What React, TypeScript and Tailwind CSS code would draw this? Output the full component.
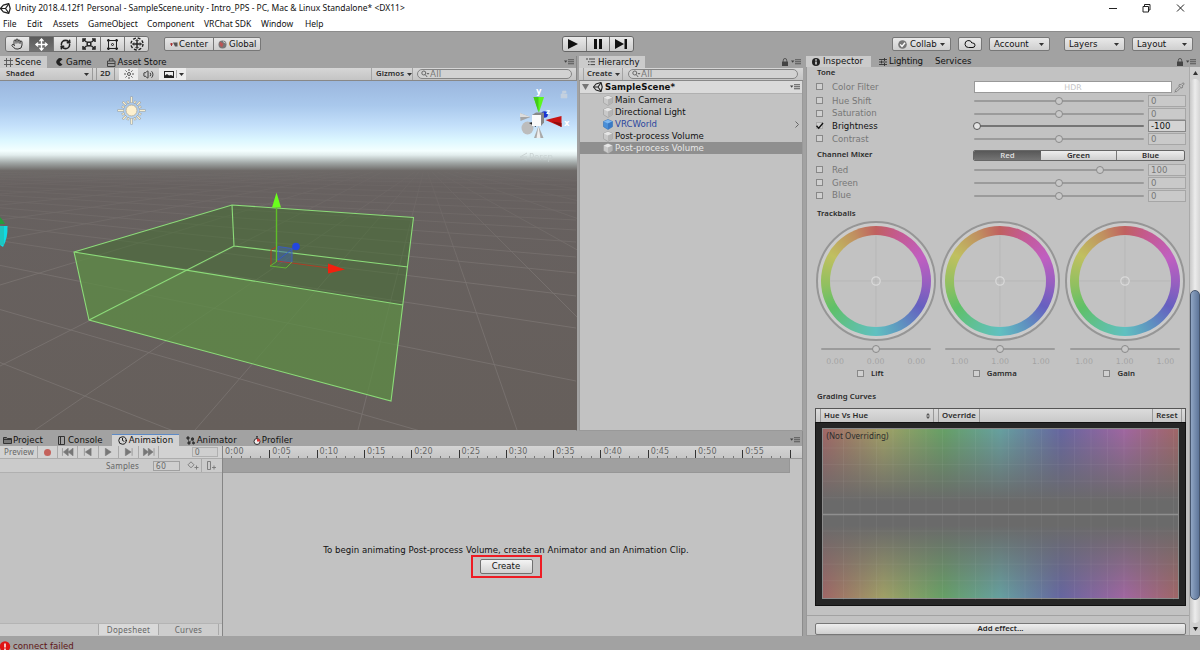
import { Hand, Move, RefreshCw, Cloud, Pipette, Volume2, Clock } from 'lucide-react';
import type { ReactNode } from 'react';

const mini = "font-['Noto_Sans',sans-serif] text-[8px] tracking-[0.1px]";
const miniBold = "font-['Noto_Sans',sans-serif] text-[7.8px] font-semibold tracking-[0.05px] text-[#2a2a2a]";

function Caret({ className = '' }: { className?: string }) {
  return (
    <svg className={`shrink-0 ${className}`} width="5" height="3" viewBox="0 0 5 3">
      <path d="M0 0h5L2.5 3z" fill="#333" />
    </svg>
  );
}

function PaneMenu({ className = '' }: { className?: string }) {
  return (
    <svg className={`shrink-0 ${className}`} width="10" height="6" viewBox="0 0 10 6">
      <path d="M0 1.5h3.4L1.7 3.8z" fill="#444" />
      <path d="M4 .8h6M4 2.8h6M4 4.8h6" stroke="#555" strokeWidth="1.1" />
    </svg>
  );
}

function PadLock({ className = '' }: { className?: string }) {
  return (
    <svg className={`shrink-0 ${className}`} width="6" height="8" viewBox="0 0 6 8">
      <path d="M0 3.500h6V8H0z" fill="#444" />
      <path d="M1.300 4V2.200a1.700 1.700 0 0 1 3.400 0V4" fill="none" stroke="#555" />
    </svg>
  );
}

function UnityLogo({ size = 10 }: { size?: number }) {
  return (
    <svg className="shrink-0" width={size} height={size} viewBox="0 0 20 20" fill="none" stroke="#222" strokeWidth="2.2" strokeLinejoin="round">
      <path d="M1 10 6 4l10-3 2.5 9L16 19 6 16z" />
      <path d="M1 10h9l6-8.500M10 10l6 8.500" />
    </svg>
  );
}

function CubeIcon({ blue = false }: { blue?: boolean }) {
  return (
    <svg className="shrink-0" width="10" height="11" viewBox="0 0 10 11">
      <path d="M5 .5 9.500 2.500v5.200L5 10.500.5 7.700V2.500z" fill={blue ? '#4a8fd8' : '#c9c9c9'} stroke={blue ? '#3472b8' : '#999'} strokeWidth=".6" />
      <path d="M.7 2.600 5 4.600l4.300-2L5 .7z" fill={blue ? '#7fb8f0' : '#e6e6e6'} />
      <path d="M5 4.600 9.300 2.600v5L5 10.200z" fill={blue ? '#3a79c4' : '#b4b4b4'} />
    </svg>
  );
}

function SearchField({ className }: { className: string }) {
  return (
    <div className={`flex items-center h-[10px] rounded-full border border-[#858585] bg-[#d2d2d2] pl-[3px] text-[8.800px] font-['DejaVu_Sans',sans-serif] tracking-[0.2px] text-[#777] ${className}`}>
      <svg width="9" height="8" viewBox="0 0 9 8" fill="none" stroke="#666">
        <circle cx="2.800" cy="3" r="2" />
        <path d="m4.200 4.600 2 2.400" />
        <path d="M5.500 3h3L7 4.800z" fill="#666" stroke="none" />
      </svg>
      All
    </div>
  );
}

function ToolButton({ children, active = false }: { children: ReactNode; active?: boolean }) {
  return (
    <div className={`flex-1 flex items-center justify-center border-r border-[#777] last:border-r-0 ${active ? 'bg-linear-to-b from-[#5a5a5a] to-[#737373] text-white' : 'bg-linear-to-b from-[#eaeaea] to-[#cbcbcb] text-[#222]'}`}>
      {children}
    </div>
  );
}

function Dropdown({ label, className }: { label: string; className: string }) {
  return (
    <div className={`flex items-center h-[14px] rounded-[2px] border border-[#777] bg-linear-to-b from-[#e9e9e9] to-[#cfcfcf] pl-[4px] pr-[5px] ${className}`}>
      {label}
      <Caret className="ml-auto" />
    </div>
  );
}

function Toolbar() {
  return (
    <div className="flex items-start h-[24px] pt-[4px] border-t border-[#8c8c8c]">
      <div className="flex h-[16px] w-[144px] ml-[5px] rounded-[3px] border border-[#707070] overflow-hidden">
        <ToolButton><Hand size={12} strokeWidth={1.8} /></ToolButton>
        <ToolButton active><Move size={13} strokeWidth={2.6} /></ToolButton>
        <ToolButton><RefreshCw size={11} strokeWidth={3.4} /></ToolButton>
        <ToolButton>
          <svg width="14" height="12" viewBox="0 0 14 12" fill="none" stroke="#222" strokeWidth="1.5">
            <path d="M1 4V1h3M10 1h3v3M13 8v3h-3M4 11H1V8M2 2l2.500 2M12 2 9.500 4M2 10l2.500-2M12 10 9.500 8" />
            <rect x="5.200" y="4.200" width="3.600" height="3.600" />
          </svg>
        </ToolButton>
        <ToolButton>
          <svg width="13" height="13" viewBox="0 0 13 13" fill="none" stroke="#222">
            <rect x="2.500" y="2.500" width="8" height="8" />
            <circle cx="6.500" cy="6.500" r="1" />
            <path d="M1 2.500h2.500M2.500 1v2.500M9.500 2.500H12M10.500 1v2.500M1 10.500h2.500M2.500 9.500V12M9.500 10.500H12M10.500 9.500V12" strokeWidth="1.6" />
          </svg>
        </ToolButton>
        <ToolButton>
          <svg width="14" height="14" viewBox="0 0 14 14" fill="none" stroke="#222" strokeWidth="1.400">
            <circle cx="7" cy="7" r="6" strokeDasharray="2.900 1.810" />
            <path d="M7 3v8M3 7h8" />
            <path d="M5.500 4 7 2.500 8.500 4M5.500 10 7 11.500 8.500 10M4 5.500 2.500 7 4 8.500M10 5.500 11.500 7 10 8.500" strokeWidth="1" />
          </svg>
        </ToolButton>
      </div>
      <div className="flex h-[14px] w-[97px] mt-[1px] ml-[15px] rounded-[2px] border border-[#777] bg-linear-to-b from-[#e6e6e6] to-[#cdcdcd]">
        <div className="flex items-center w-[49px] pl-[5px] border-r border-[#777]">
          <svg className="mr-[1px]" width="8" height="7" viewBox="0 0 8 7">
            <path d="M0 3h3M1.500 2v3" stroke="#a33" />
            <path d="M3 1.500h4.500v4H5z" fill="#555" />
          </svg>
          Center
        </div>
        <div className="flex items-center pl-[4px]">
          <svg className="mr-[2px]" width="9" height="9" viewBox="0 0 9 9">
            <circle cx="4.500" cy="4.500" r="4" fill="#777" />
            <path d="M2 1.500 5.500 4 4 7.500 1.500 5z" fill="#b55" />
            <path d="M5 1.500 7.500 3" stroke="#ccc" />
          </svg>
          Global
        </div>
      </div>
      <div className="flex h-[16px] w-[72px] ml-[301px] rounded-[3px] border border-[#666] overflow-hidden">
        <ToolButton>
          <svg className="mr-[3px]" width="12" height="10" viewBox="0 0 12 10"><path d="M1 0v10l10-5z" fill="#111" /></svg>
        </ToolButton>
        <ToolButton>
          <svg width="8" height="10" viewBox="0 0 8 10"><path d="M0 0h3v10H0zM5 0h3v10H5z" fill="#111" /></svg>
        </ToolButton>
        <ToolButton>
          <svg width="13" height="10" viewBox="0 0 13 10"><path d="M0 0v10l9-5zM9.500 0H12v10H9.500z" fill="#111" /></svg>
        </ToolButton>
      </div>
      <div className="flex mt-[1px] ml-[258px]">
        <div className="flex items-center w-[59px] h-[14px] rounded-[2px] border border-[#777] bg-linear-to-b from-[#e9e9e9] to-[#cfcfcf] pl-[5px] pr-[5px]">
          <svg className="mr-[3px]" width="9" height="9" viewBox="0 0 9 9">
            <circle cx="4.500" cy="4.500" r="4.300" fill="#777" />
            <path d="m2.200 4.400 1.800 2 3-3.600" fill="none" stroke="#fff" strokeWidth="1.400" />
          </svg>
          Collab
          <Caret className="ml-auto" />
        </div>
        <div className="flex items-center justify-center w-[24px] h-[14px] ml-[7px] rounded-[2px] border border-[#777] bg-linear-to-b from-[#e9e9e9] to-[#cfcfcf]">
          <Cloud size={12} strokeWidth={2} />
        </div>
        <Dropdown label="Account" className="w-[61px] ml-[7px]" />
        <Dropdown label="Layers" className="w-[61px] ml-[14px]" />
        <Dropdown label="Layout" className="w-[61px] ml-[7px]" />
      </div>
    </div>
  );
}

function SceneView() {
  const crossY = [181, 185, 190, 196, 203, 211, 220, 230, 242, 257, 273, 296, 328, 381, 476, 590];
  const fanLeft = [172, 178, 185, 194, 205, 220, 240, 285, 366];
  const fanDown = [35, 195, 358, 517, 690, 900, 1180, 1560, 2100, 3000];
  return (
    <svg className="block" width="577" height="349" viewBox="0 81 577 349">
      <defs>
        <linearGradient id="sky" x1="0" y1="81" x2="0" y2="430" gradientUnits="userSpaceOnUse">
          <stop offset="0" stopColor="#9bb7de" />
          <stop offset=".07" stopColor="#a9c8ec" />
          <stop offset=".13" stopColor="#c5e1fb" />
          <stop offset=".17" stopColor="#dcf7ff" />
          <stop offset=".2" stopColor="#f4ffff" />
          <stop offset=".212" stopColor="#e2eded" />
          <stop offset=".235" stopColor="#a0a6a5" />
          <stop offset=".257" stopColor="#6d6967" />
          <stop offset=".3" stopColor="#676160" />
          <stop offset="1" stopColor="#665f5b" />
        </linearGradient>
        <linearGradient id="gridFade" x1="0" y1="170" x2="0" y2="280" gradientUnits="userSpaceOnUse">
          <stop offset="0" stopColor="#fff" stopOpacity=".15" />
          <stop offset="1" stopColor="#fff" />
        </linearGradient>
        <mask id="ground" maskUnits="userSpaceOnUse" x="0" y="81" width="577" height="349">
          <rect x="0" y="172" width="577" height="258" fill="url(#gridFade)" />
        </mask>
      </defs>
      <rect y="81" width="577" height="349" fill="url(#sky)" />
      <g stroke="#807a77" strokeWidth=".8" opacity=".8" mask="url(#ground)">
        {crossY.map((y) => <line key={y} x1="-500" y1="165" x2="576" y2={y} />)}
        {fanLeft.map((y) => <line key={y} x1="396" y1="165" x2="0" y2={y} />)}
        {fanDown.map((x) => <line key={x} x1="425" y1="165" x2={x} y2="430" />)}
      </g>
      {/* post-process volume bounds */}
      <path d="M74 252 232 205l181.500 12.500L391 401 89 320z" fill="#416f2d" fillOpacity=".5" />
      <path d="M74 252 403 305 391 401 89 320z" fill="#69994f" fillOpacity=".5" />
      <g fill="none" stroke="#8cdb79" strokeWidth="1.1">
        <path d="M74 252 232 205l181.500 12.500L391 401 89 320zL403 305" />
        <path d="M232 205l2 41 174 21M234 246 89 320" />
      </g>
      {/* directional light gizmo */}
      <g stroke="#f7eed1" strokeWidth="1.300">
        {Array.from({ length: 16 }, (_, i) => {
          const a = (i * Math.PI) / 8;
          const r = i % 4 === 0 ? 13.5 : i % 2 === 0 ? 12 : 10;
          return (
            <g key={i}>
              <line x1={131.5 + 7.5 * Math.cos(a)} y1={110.5 + 7.5 * Math.sin(a)} x2={131.5 + (r + 0.5) * Math.cos(a)} y2={110.5 + (r + 0.5) * Math.sin(a)} stroke="#9c9c94" strokeWidth="2.200" />
              <line x1={131.5 + 8 * Math.cos(a)} y1={110.5 + 8 * Math.sin(a)} x2={131.5 + r * Math.cos(a)} y2={110.5 + r * Math.sin(a)} />
            </g>
          );
        })}
        <circle cx="131.500" cy="110.500" r="5.500" fill="#fdf0ce" stroke="#b3af9f" strokeWidth=".9" />
      </g>
      <path d="M0 217q3 3 5 7H0z" fill="#279a3c" />
      <path d="M0 226h7.500q.5 12-4.500 21L0 245z" fill="#0fdbe6" />
      <path d="M0 226h4v19H0z" fill="#28b7a6" opacity=".6" />
      {/* move handles */}
      <path d="M276.500 262V207" stroke="#5fbf28" strokeWidth="1.400" />
      <path d="M276.500 192.500 281 207.500h-9z" fill="#6aff1c" />
      <path d="M278 246.500l14 2v14l-14-1z" fill="#3d63a8" fillOpacity=".5" stroke="#3a5ad0" strokeWidth=".8" />
      <path d="m278 260 17-13" stroke="#3056d8" strokeWidth=".8" />
      <path d="M276 247l-5 3v16M277 261l52 7" fill="none" stroke="#b83a22" strokeWidth=".9" />
      <path d="m276 262-6 4 16 2 6-6" fill="none" stroke="#62b634" />
      <circle cx="296" cy="246.500" r="3.800" fill="#2346e0" />
      <path d="m328 263.500 17 6-17 4z" fill="#f3200e" />
      {/* orientation gizmo */}
      <path d="m520 113 10.500 4-10 4z" fill="#a4a4a4" />
      <path d="m520 113 10.500 4-10.500 0z" fill="#ddd" />
      <path d="M538.500 126l5 12h-9.500z" fill="#aaa" />
      <path d="m538.500 126 2 12h-4z" fill="#eee" />
      <ellipse cx="527.500" cy="128" rx="6" ry="6.500" fill="#bcbcbc" />
      <path d="m529 123 7-2v6z" fill="#222" />
      <path d="M533.500 97h10.500l-5 15.500z" fill="#5cf81c" />
      <path d="M533.500 97h5v15.500z" fill="#43cc18" />
      <circle cx="544.500" cy="114.500" r="3.300" fill="#1c32cf" />
      <path d="M532 115l4-2.500h8v10l-3 3.500h-9z" fill="#888" />
      <path d="M532 115h9v11h-9z" fill="#fafafa" />
      <path d="m545.500 120 16-4v11z" fill="#c81414" />
      <path d="m552 121.500 9.500 5.500v-4z" fill="#8a0e0e" />
      <g className="font-['DejaVu_Sans',sans-serif] font-bold" fontSize="8.500" fill="#fff">
        <text x="536" y="93.500">y</text>
        <text x="564" y="125.500">x</text>
        <text x="546" y="113.500" fontSize="7">z</text>
      </g>
      <path d="M561 94h6v4h-6zM562.500 94v-3h3.500v2" fill="#c4d0df" stroke="#c4d0df" strokeWidth=".6" />
      <g fill="#c6cfcf" opacity=".85">
        <text x="529" y="160" fontSize="8.500" className="font-['DejaVu_Sans',sans-serif]" textLength="24">Persp</text>
        <path d="m527 153-7 4 7 3M520 157h7" fill="none" stroke="#c6cfcf" />
      </g>
    </svg>
  );
}

function ScenePane() {
  return (
    <div className="w-[577px] border-r border-[#888]">
      <div className="flex h-[12px] items-center">
        <div className="flex items-center w-[47px] h-full bg-[#cbcbcb] pl-[4px]">
          <svg className="mr-[2px]" width="9" height="9" viewBox="0 0 9 9" stroke="#555" strokeWidth=".9"><path d="M2.500 0v9M6.500 0v9M0 2.500h9M0 6.500h9" /></svg>
          Scene
        </div>
        <svg className="ml-[9px] mr-[3px]" width="7" height="8" viewBox="0 0 7 8"><path d="M6.500 1.200A3.700 3.700 0 1 0 6.500 6.800L3.500 4z" fill="#222" /></svg>
        Game
        <svg className="ml-[15px] mr-[2px]" width="9" height="9" viewBox="0 0 9 9" fill="none" stroke="#444"><path d="M.5 3h7.500v5.500H.5zM2.500 3V.8H6V3M.5 5.500h7.500" /></svg>
        Asset Store
        <PaneMenu className="ml-auto mr-[2px]" />
      </div>
      <div className={`flex items-center h-[13px] border-b border-[#888] bg-linear-to-b from-[#d6d6d6] to-[#c4c4c4] ${miniBold}`}>
        <div className="flex items-center w-[93px] h-full pl-[6px] pr-[3px] border-r border-[#9a9a9a]">Shaded<Caret className="ml-auto" /></div>
        <div className="flex items-center justify-center w-[19px] h-full ml-[3px] border-x border-[#9a9a9a]">2D</div>
        <div className="flex items-center justify-center w-[19px] h-full ml-[4px] bg-[#ededed]">
          <svg width="10" height="10" viewBox="0 0 10 10" stroke="#444" strokeWidth=".9">
            <path d="M5 0v2M5 8v2M0 5h2M8 5h2M1.500 1.500l1.300 1.300M7.200 7.200l1.300 1.300M8.500 1.500 7.200 2.800M1.500 8.500l1.300-1.300" />
            <circle cx="5" cy="5" r="1.500" fill="none" />
          </svg>
        </div>
        <div className="flex items-center justify-center w-[21px] h-full"><Volume2 size={11} strokeWidth={2} /></div>
        <div className="flex items-center h-full w-[27px] pl-[5px] bg-[#ededed]">
          <svg className="shrink-0" width="10" height="7" viewBox="0 0 10 7">
            <rect x=".5" y=".5" width="9" height="6" fill="#eee" stroke="#222" />
            <path d="M1 6V4.500l2-1.500 2 1.500L7 4l2 1v1z" fill="#222" />
          </svg>
          <div className="h-[8px] w-px ml-[2px] bg-[#aaa]" />
          <Caret className="ml-[2px]" />
        </div>
        <div className="flex items-center w-[42px] h-full ml-auto pl-[4px] border-x border-[#a4a4a4]">Gizmos<Caret className="ml-[3px]" /></div>
        <SearchField className="w-[155px] ml-[4px] mr-[4px] font-normal" />
      </div>
      <SceneView />
    </div>
  );
}

const objects = [
  { name: 'Main Camera' },
  { name: 'Directional Light' },
  { name: 'VRCWorld', prefab: true },
  { name: 'Post-process Volume' },
  { name: 'Post-process Volume', selected: true },
];

function HierarchyPane() {
  return (
    <div className="flex flex-col w-[224px] ml-[2px]">
      <div className="flex items-center h-[12px]">
        <div className="flex items-center w-[66px] h-full bg-[#cbcbcb] pl-[7px]">
          <svg className="mr-[3px]" width="9" height="8" viewBox="0 0 9 8" stroke="#444"><path d="M0 1h2M3 1h6M2 3.800h1.500M4.500 3.800H9M2 6.600h1.500M4.500 6.600H9" /></svg>
          Hierarchy
        </div>
        <PadLock className="ml-auto mr-[3px]" />
        <PaneMenu className="mr-[2px]" />
      </div>
      <div className={`flex items-center h-[13px] border-b border-[#888] bg-linear-to-b from-[#d6d6d6] to-[#c4c4c4] ${miniBold}`}>
        <div className="flex items-center h-full w-[40px] ml-[4px] pl-[3px] border-x border-[#a4a4a4]">Create<Caret className="ml-[3px]" /></div>
        <SearchField className="w-[170px] ml-[5px] font-normal" />
      </div>
      <div className="flex-1 bg-[#c2c2c2] border border-t-0 border-[#999]">
        <div className="flex items-center h-[13px] pl-[2px] pr-[2px] border-b border-[#b0b0b0] bg-[#dadada] font-bold tracking-[0.05px]">
          <svg className="mr-[4px]" width="7" height="6" viewBox="0 0 7 6"><path d="M0 0h7L3.500 6z" fill="#777" /></svg>
          <UnityLogo size={10} />
          <span className="ml-[2px]">SampleScene*</span>
          <PaneMenu className="ml-auto" />
        </div>
        {objects.map((o, i) => (
          <div key={i} className={`flex items-center h-[12px] pl-[22.500px] pr-[3px] ${o.selected ? 'bg-[#8f8f8f] text-[#e8e8e8]' : o.prefab ? 'text-[#2b469e]' : ''}`}>
            <CubeIcon blue={o.prefab} />
            <span className="ml-[2.500px]">{o.name}</span>
            {o.prefab && (
              <svg className="ml-auto" width="4" height="7" viewBox="0 0 4 7" fill="none" stroke="#666"><path d="m.5.5 3 3-3 3" /></svg>
            )}
          </div>
        ))}
      </div>
    </div>
  );
}

function AnimationPane() {
  const labels = ['0:00', '0:05', '0:10', '0:15', '0:20', '0:25', '0:30', '0:35', '0:40', '0:45', '0:50', '0:55'];
  const transport = [
    'M1 0v8M7 0 2 4l5 4zM12 0 7 4l5 4z',
    'M3 0v8M10 0 4 4l6 4z',
    'M3 0v8l6-4z',
    'M10 0v8M3 0l6 4-6 4z',
    'M12 0v8M1 0l5 4-5 4zM6 0l5 4-5 4z',
  ];
  return (
    <div className="flex flex-col h-[205px] pt-[3px] border-r border-[#8c8c8c]">
      <div className="flex items-center h-[12px] tracking-[0.08px]">
        <svg className="ml-[3px] mr-[1px]" width="9" height="8" viewBox="0 0 9 8" fill="#777" stroke="#333"><path d="M.5 7.500v-6h3l1 1h4v5zM.5 3.500h8" /></svg>
        Project
        <svg className="ml-[15px] mr-[3px]" width="7" height="9" viewBox="0 0 7 9" fill="none" stroke="#333"><path d="M.5.5h6v8h-6zM2.500 1v7" /></svg>
        Console
        <div className="flex items-center w-[67px] h-full ml-[9px] pl-[6px] border-t border-[#5d8ac6] bg-[#d2d2d2]">
          <Clock className="mr-[2px] shrink-0" size={9} strokeWidth={2.500} />
          <span>Animation</span>
        </div>
        <svg className="ml-[7px] mr-[2px]" width="9" height="9" viewBox="0 0 9 9" fill="#333" stroke="#333"><circle cx="2" cy="2" r="1.200" /><circle cx="6.500" cy="3" r="1.200" /><circle cx="3" cy="7" r="1.200" /><circle cx="7.500" cy="7" r="1" /><path d="m2 2 1 5 3.500-4 1 4" fill="none" strokeWidth=".7" /></svg>
        Animator
        <svg className="ml-[16px] mr-[1px]" width="8" height="9" viewBox="0 0 8 9"><circle cx="4" cy="5.500" r="3" fill="#eee" stroke="#333" /><path d="M4 5.500V2.500a3 3 0 0 1 3 3z" fill="#d33" /><path d="M3 .7h2M4 .7v2" stroke="#333" /></svg>
        Profiler
        <PaneMenu className="ml-auto mr-[2px]" />
      </div>
      <div className="flex flex-1 bg-[#c2c2c2]">
        <div className={`flex flex-col w-[223px] border-r border-[#858585] text-[#666] ${mini}`}>
          <div className="flex items-center h-[13px] border-b border-[#adadad] bg-[#d2d2d2]">
            <div className="flex items-center w-[38px] h-full pl-[4px] border-r border-[#aaa]">Preview</div>
            <div className="flex items-center justify-center w-[20px] h-full border-r border-[#aaa]"><div className="size-[7px] rounded-full bg-[#c4625c]" /></div>
            {transport.map((d) => (
              <div key={d} className="flex items-center justify-center w-[20.300px] h-full border-r border-[#aaa]">
                <svg width="13" height="8" viewBox="-0.500 0 13.500 8" fill="#777" stroke="#777"><path d={d} strokeWidth=".6" /></svg>
              </div>
            ))}
            <div className="w-[26px] h-[10px] ml-auto mr-[4px] pl-[2px] leading-[8px] border border-[#b0b0b0] bg-[#cfcfcf]">0</div>
          </div>
          <div className="flex items-center h-[14px] border-b border-[#b0b0b0] bg-[#cbcbcb]">
            <span className="ml-[106px] tracking-[0.2px]">Samples</span>
            <div className="w-[27px] h-[10px] ml-auto pl-[2px] leading-[8px] border border-[#a0a0a0] bg-[#cfcfcf] tracking-[0.6px]">60</div>
            <svg className="ml-[7px]" width="12" height="9" viewBox="0 0 12 9" fill="none" stroke="#777"><path d="m4 .8 3 3-3 3-3-3zM7.500 6.500h4M9.500 4.500v4" strokeWidth=".9" /></svg>
            <div className="w-px h-full ml-[2px] bg-[#aaa]" />
            <svg className="ml-[5px] mr-[6px]" width="9" height="9" viewBox="0 0 9 9" fill="none" stroke="#777"><path d="M.5.5h3v8h-3zM5 6.500h4M7 4.500v4" strokeWidth=".9" /></svg>
          </div>
          <div className="flex-1" />
          <div className="flex h-[13px] pb-[1px] border-t border-[#b4b4b4] bg-[#cdcdcd] tracking-[0.3px]">
            <div className="flex items-center justify-center w-[61px] ml-[98px] border-x border-[#aaa] bg-[#d9d9d9]">Dopesheet</div>
            <div className="flex items-center justify-center w-[60px] border-r border-[#aaa]">Curves</div>
          </div>
        </div>
        <div className="flex flex-col flex-1">
          <div className="h-[13px] border-b border-[#999] bg-linear-to-b from-[#d4d4d4] to-[#c6c6c6]">
            <svg className="block text-[8px] font-['DejaVu_Sans',sans-serif]" width="578" height="12" viewBox="0 0 578 12">
              {Array.from({ length: 61 }, (_, i) => (
                <rect key={i} x={Math.round(i * 9.46) - 1} y={i % 5 ? 10 : 4} width="1" height={i % 5 ? 2 : 8} fill={i % 5 ? '#777' : '#333'} />
              ))}
              {labels.map((l, i) => (
                <text key={l} x={2 + i * 47.3} y="8" fill="#666" textLength="18.500">{l}</text>
              ))}
            </svg>
          </div>
          <div className="h-[14px] w-[567px] border-b border-r border-[#969696] bg-[#a0a0a0]" />
          <div className="flex flex-col items-center pt-[71px] pr-[13px]">
            <div className="text-[8.600px] leading-[12px] tracking-[0.04px] whitespace-nowrap">To begin animating Post-process Volume, create an Animator and an Animation Clip.</div>
            <div className="mt-[-1px] flex items-center justify-center w-[71px] h-[23px] border-2 border-[#ee1c24]">
              <div className="flex items-center justify-center w-[53px] h-[15px] rounded-[2px] border border-[#707070] bg-linear-to-b from-[#f4f4f4] to-[#d2d2d2]">Create</div>
            </div>
          </div>
        </div>
      </div>
    </div>
  );
}

type Param = { label: string; value: string; pos: number; on?: boolean };

const tone: Param[] = [
  { label: 'Hue Shift', value: '0', pos: 50 },
  { label: 'Saturation', value: '0', pos: 50 },
  { label: 'Brightness', value: '-100', pos: 2, on: true },
  { label: 'Contrast', value: '0', pos: 50 },
];

const mixer: Param[] = [
  { label: 'Red', value: '100', pos: 74 },
  { label: 'Green', value: '0', pos: 50 },
  { label: 'Blue', value: '0', pos: 50 },
];

function Checkbox({ on = false }: { on?: boolean }) {
  return (
    <svg className="shrink-0" width="8" height="8" viewBox="0 0 8 8" fill="none">
      <rect x=".5" y=".5" width="6" height="6" fill="#d0d0d0" stroke={on ? '#aaa' : '#888'} />
      {on && <path d="m.5 3.800 2.200 2.400L7 1" stroke="#111" strokeWidth="1.400" />}
    </svg>
  );
}

function Slider({ pos, on = false, className }: { pos: number; on?: boolean; className: string }) {
  return (
    <div className={`relative flex items-center h-[9px] ${className}`}>
      <div className={`w-full h-[2px] rounded-full ${on ? 'bg-[#757575]' : 'bg-[#9b9b9b]'}`} />
      <div
        className={`absolute size-[8px] -ml-[4px] rounded-full border ${on ? 'border-[#555] bg-[#e4e4e4]' : 'border-[#8a8a8a] bg-[#c8c8c8]'}`}
        style={{ left: `${pos}%` }}
      />
    </div>
  );
}

function ParamRow({ label, value, pos, on }: Param) {
  return (
    <div className={`flex items-center h-[12.800px] pl-[9px] ${on ? 'text-[#111]' : 'text-[#777]'}`}>
      <Checkbox on={on} />
      <span className="w-[142px] ml-[8px]">{label}</span>
      <Slider className="w-[170px]" pos={pos} on={on} />
      <div className={`w-[38px] h-[12px] ml-[4px] pl-[2px] leading-[10px] border ${on ? 'border-[#888] bg-[#d4d4d4]' : 'border-[#a6a6a6] bg-[#c9c9c9]'}`}>{value}</div>
    </div>
  );
}

function Trackball({ label, value }: { label: string; value: string }) {
  return (
    <div className="flex flex-col items-center w-[124.500px]">
      <div className="flex items-center justify-center size-[120px] rounded-full border-2 border-[#969696] bg-[#cbcbcb]">
        <div className="flex items-center justify-center size-[110px] rounded-full bg-[conic-gradient(#c06060,#c45a90_25deg,#c05fc0_62deg,#985fc0_92deg,#6660c0_120deg,#5f90c0_148deg,#60c0c0_180deg,#60c094_212deg,#5fc068_238deg,#90c060_265deg,#c0c060_300deg,#c09060_335deg,#c06060)]">
          <div className="flex items-center justify-center size-[92px] rounded-full bg-[#c2c2c2]">
            <svg width="92" height="92" viewBox="0 0 92 92" fill="none">
              <path d="M46 0v92M0 46h92" stroke="#b7b7b7" />
              <circle cx="46" cy="46" r="4.200" stroke="#dadada" strokeWidth="1.200" />
            </svg>
          </div>
        </div>
      </div>
      <Slider className="w-[110px] mt-[3px]" pos={50} />
      <div className="flex justify-around w-[122px] mt-[2px] h-[13px] items-center text-[#a2a2a2] text-[7.800px] font-['DejaVu_Sans',sans-serif] tracking-[0.1px]">
        <span>{value}</span><span>{value}</span><span>{value}</span>
      </div>
      <div className={`flex items-center h-[12px] gap-[6px] pr-[11px] ${miniBold}`}>
        <Checkbox />
        {label}
      </div>
    </div>
  );
}

function GradingCurves() {
  return (
    <div className="w-[371px] ml-[8px]">
      <div className={`flex items-center h-[14px] border border-b-0 border-[#555] bg-linear-to-b from-[#dcdcdc] to-[#c8c8c8] ${miniBold}`}>
        <div className="flex items-center w-[114px] h-full ml-[4px] pl-[3px] pr-[3px] border-x border-[#999]">
          Hue Vs Hue
          <svg className="ml-auto" width="4" height="6" viewBox="0 0 4 6"><path d="M0 2.500h4L2 0zM0 3.500h4L2 6z" fill="#555" /></svg>
        </div>
        <div className="flex items-center justify-center w-[42px] h-full ml-[4px] border-x border-[#999]">Override</div>
        <div className="flex items-center justify-center w-[30px] h-full ml-auto mr-[3px] border-x border-[#999]">Reset</div>
      </div>
      <div className="flex h-[184px] bg-[#262626] border border-[#111] px-[6px] pt-[5px] pb-[6px]">
        <div className="flex flex-1 border border-[#8b8b8b] bg-[linear-gradient(90deg,#a06666,#a0a066_17%,#66a066_34%,#66a0a0_50%,#6666a0_67%,#a066a0_85%,#a06666)]">
          <div className="flex-1 flex bg-[linear-gradient(180deg,#6a6a6a00,#6a6a6a_43%,#6a6a6a_57%,#6a6a6a00)]">
            <svg width="355" height="171" viewBox="0 0 355 171" stroke="#fff">
              {Array.from({ length: 21 }, (_, i) => <path key={i} d={`M${20.500 + i * 16.500} 0v171`} strokeOpacity=".05" />)}
              {Array.from({ length: 9 }, (_, i) => <path key={i} d={`M0 ${19 + i * 16.600}h355`} strokeOpacity=".05" />)}
              <path d="M0 85.500h355" stroke="#8f8f8f" strokeWidth="1.500" />
              <text x="3.500" y="10" stroke="none" fill="#2c2c2c" className={mini} textLength="62">(Not Overriding)</text>
            </svg>
          </div>
        </div>
      </div>
    </div>
  );
}

function InspectorPane() {
  return (
    <div className="w-[394px] ml-[3px] flex flex-col">
      <div className="flex items-center h-[12px]">
        <div className="flex items-center w-[65px] h-full pl-[6px] bg-[#cbcbcb]">
          <svg className="mr-[3px]" width="8" height="8" viewBox="0 0 8 8"><circle cx="4" cy="4" r="4" fill="#222" /><path d="M4 1.300v1.400M4 3.500v3" stroke="#fff" strokeWidth="1.300" /></svg>
          Inspector
        </div>
        <svg className="ml-[8px] mr-[2px]" width="8" height="8" viewBox="0 0 8 8" stroke="#333" strokeWidth=".9"><path d="M0 1.500h8M0 4h8M0 6.500h8M5.500 0v3M2.500 2.500v3M5.500 5v3" /></svg>
        <span className="tracking-[-0.1px]">Lighting</span>
        <span className="ml-[12px] tracking-[0.05px]">Services</span>
        <PadLock className="ml-auto mr-[3px]" />
        <PaneMenu className="mr-[4px]" />
      </div>
      <div className="flex flex-1 bg-[#c2c2c2] border-l border-b border-[#999]">
        <div className="flex flex-col w-[382px]">
          <div className={`h-[12px] pl-[10px] leading-[11px] ${miniBold}`}>Tone</div>
          <div className="flex items-center h-[15px] pt-[1px] pl-[9px] text-[#777]">
            <Checkbox />
            <span className="w-[142px] ml-[8px]">Color Filter</span>
            <div className="flex items-center justify-center w-[198px] h-[12px] border border-[#999] bg-white text-[#c4c4c4] text-[7.800px]">HDR</div>
            <Pipette className="ml-[2px] shrink-0" size={11} strokeWidth={1.800} />
          </div>
          {tone.map((p) => <ParamRow key={p.label} {...p} />)}
          <div className={`flex items-center h-[15px] mt-[2px] mb-[1px] pl-[10px] ${miniBold}`}>
            <span className="w-[156px]">Channel Mixer</span>
            <div className="flex w-[212px] h-[11px] rounded-[2px] border border-[#666] bg-linear-to-b from-[#eee] to-[#cfcfcf] leading-[9px] text-center overflow-hidden">
              <div className="w-[67px] bg-linear-to-b from-[#585858] to-[#747474] text-[#ddd]">Red</div>
              <div className="w-[76px] border-r border-[#777]">Green</div>
              <div className="flex-1">Blue</div>
            </div>
          </div>
          {mixer.map((p) => <ParamRow key={p.label} {...p} />)}
          <div className={`h-[18px] pl-[10px] pt-[5px] leading-[12px] ${miniBold}`}>Trackballs</div>
          <div className="flex w-[373.500px] ml-[6.500px] mt-[1px]">
            <Trackball label="Lift" value="0.00" />
            <Trackball label="Gamma" value="1.00" />
            <Trackball label="Gain" value="1.00" />
          </div>
          <div className={`h-[28px] pl-[10px] pt-[10px] leading-[12px] ${miniBold}`}>Grading Curves</div>
          <GradingCurves />
          <div className="h-[10px] border-b border-[#a2a2a2]" />
          <div className={`flex items-center justify-center w-[371px] h-[12px] ml-[8px] mt-[7px] rounded-[2px] border border-[#777] bg-linear-to-b from-[#eee] to-[#cfcfcf] ${miniBold}`}>Add effect...</div>
        </div>
        <div className="flex flex-col items-center w-[11px] bg-[#d0d0d0] border-l border-[#aaa]">
          <svg width="9" height="12" viewBox="0 0 9 12"><path d="M2 8h5L4.500 4z" fill="#333" /></svg>
          <div className="flex flex-col w-full flex-1 rounded-full bg-linear-to-r from-[#c8c8c8] via-[#ececec] to-[#d4d4d4]">
            <div className="h-[310px] mt-[211px] rounded-full border border-[#46566e] bg-linear-to-r from-[#90a6c4] to-[#5d7599]" />
          </div>
          <svg width="9" height="12" viewBox="0 0 9 12"><path d="M2 4h5L4.500 8z" fill="#222" /></svg>
        </div>
      </div>
    </div>
  );
}

export default function App() {
  return (
    <div className="flex flex-col w-[1200px] h-[650px] overflow-hidden bg-[#a2a2a2] font-['DejaVu_Sans',sans-serif] text-[8.600px] leading-none whitespace-nowrap text-[#111]">
      <div className="flex items-center h-[16px] bg-white font-['Noto_Sans',sans-serif]">
        <UnityLogo size={11} />
        <span className="ml-[4px] text-[8.500px] tracking-[-0.01px]">Unity 2018.4.12f1 Personal - SampleScene.unity - Intro_PPS - PC, Mac &amp; Linux Standalone* &lt;DX11&gt;</span>
        <svg className="ml-auto mr-[13px]" width="80" height="10" viewBox="0 0 80 10" fill="none" stroke="#222">
          <path d="M2 5.500h8M36 3.500h5.500V9H36zM37.500 3.500v-2H43v5.500h-1.500M70 1.500l7 7M77 1.500l-7 7" />
        </svg>
      </div>
      <div className="flex items-center h-[15px] pt-[2px] pl-[3px] bg-white font-['Noto_Sans',sans-serif] text-[8.500px]">
        <span className="w-[24px]">File</span>
        <span className="w-[26px]">Edit</span>
        <span className="w-[35px]">Assets</span>
        <span className="w-[59px]">GameObject</span>
        <span className="w-[57px]">Component</span>
        <span className="w-[57px]">VRChat SDK</span>
        <span className="w-[44px]">Window</span>
        <span>Help</span>
      </div>
      <Toolbar />
      <div className="flex h-[581px] pt-px">
        <div className="w-[803px]">
          <div className="flex h-[375px]">
            <ScenePane />
            <HierarchyPane />
          </div>
          <AnimationPane />
        </div>
        <InspectorPane />
      </div>
      <div className="flex items-center h-[14px] pt-[6px] text-[#5e1414]">
        <svg className="mr-[2px]" width="11" height="11" viewBox="0 0 11 11"><circle cx="5" cy="5.500" r="5.200" fill="#e01515" /><path d="M5 2.500v4M5 7.500v1.500" stroke="#fff" strokeWidth="1.500" /></svg>
        connect failed
      </div>
    </div>
  );
}
